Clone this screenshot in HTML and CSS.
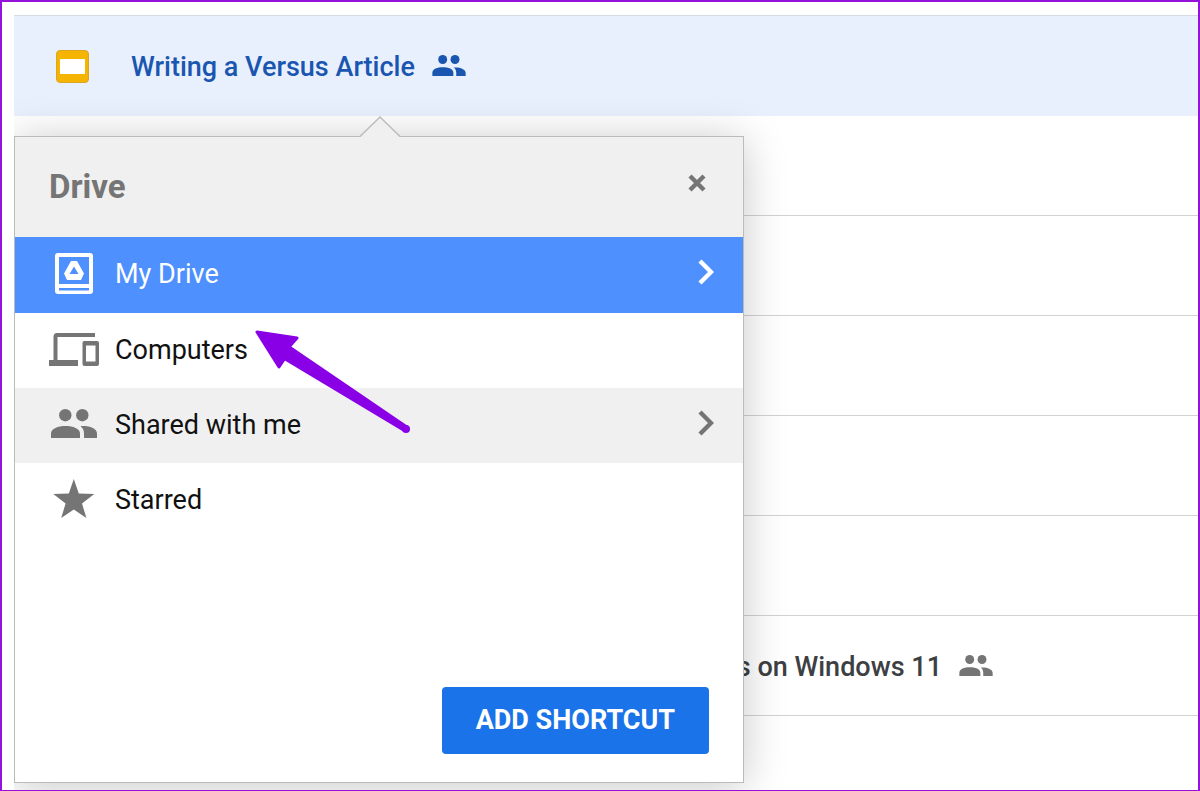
FILE: index.html
```html
<!DOCTYPE html>
<html lang="en">
<head>
    <meta charset="UTF-8">
    <meta name="viewport" content="width=device-width, initial-scale=1.0">
    <title>Add Shortcut</title>
    <link rel="stylesheet" href="styles.css">
</head>
<body>

    <!-- Shared icon shapes -->
    <svg class="sprite" aria-hidden="true">
        <symbol id="people" viewBox="0 0 46 29">
            <circle cx="14.3" cy="6.2" r="6.2"/>
            <circle cx="31.3" cy="6.2" r="6.2"/>
            <path d="M0 29V24.5C0 19.5 7 17 14.5 17S29 19.5 29 24.5V29Z"/>
            <path d="M29.5 17.2C38 16.6 46 19.3 46 24.5V29H33V24.5C33 21.3 31.8 19 29.5 17.2Z"/>
        </symbol>
        <symbol id="chevron" viewBox="0 0 16 26">
            <path d="M2 2L13 13L2 24" fill="none" stroke="currentColor" stroke-width="4.4"/>
        </symbol>
    </svg>

    <main class="drive">
        <ul class="file-list">
            <li class="file selected">
                <svg class="file-icon" viewBox="0 0 33 33" aria-hidden="true">
                    <rect x="0.5" y="0.5" width="32" height="32" rx="3.5" fill="#f4b400" stroke="#dba520"/>
                    <rect x="4" y="9" width="25" height="15" fill="#fff"/>
                </svg>
                <a class="file-name" href="#">Writing a Versus Article</a>
                <svg class="shared-icon" aria-hidden="true"><use href="#people"/></svg>
            </li>
            <li class="file"></li>
            <li class="file"></li>
            <li class="file"></li>
            <li class="file"></li>
            <li class="file"></li>
            <li class="file">
                <a class="file-name covered" href="#">s on Windows 11</a>
                <svg class="shared-icon" aria-hidden="true"><use href="#people"/></svg>
            </li>
        </ul>

        <!-- Add shortcut popup -->
        <section class="picker" role="dialog" aria-labelledby="pickerTitle">
            <svg class="picker-tip" viewBox="0 0 40 21" aria-hidden="true">
                <path d="M0 21L20 1L40 21Z" fill="#f0f0f0"/>
                <path d="M0 20.5L20 1L40 20.5" fill="none" stroke="#bbb" stroke-width="1.4"/>
            </svg>
            <header class="picker-header">
                <h2 id="pickerTitle">Drive</h2>
                <button class="close" aria-label="Close">
                    <svg viewBox="0 0 20 20" aria-hidden="true">
                        <path d="M3 3L17 17M17 3L3 17" stroke="currentColor" stroke-width="4.4"/>
                    </svg>
                </button>
            </header>

            <div class="locations">
                <button class="location active">
                    <svg class="location-icon" viewBox="0 0 50 42" aria-hidden="true">
                        <path fill-rule="evenodd" d="M9 0H41Q44 0 44 3V38Q44 41 41 41H9Q6 41 6 38V3Q6 0 9 0ZM10 4V31H40V4ZM10 35V37.5H40V35Z"/>
                        <path fill-rule="evenodd" d="M22 8H28L35 20.5L32 27H18L15 20.5ZM25 13.5L20.5 21H29.5Z"/>
                    </svg>
                    <span>My Drive</span>
                    <svg class="chevron" aria-hidden="true"><use href="#chevron"/></svg>
                </button>
                <button class="location">
                    <svg class="location-icon" viewBox="0 0 50 42" aria-hidden="true">
                        <path d="M8 4H46V8H8.500V31H29V37H0V31H4.500V8Q4.500 4 8 4Z"/>
                        <path fill-rule="evenodd" d="M35 12H48Q50 12 50 14V35Q50 37 48 37H35.500Q33.500 37 33.500 35V14Q33.500 12 35 12ZM37 16.500V32.500H46.500V16.500Z"/>
                    </svg>
                    <span>Computers</span>
                </button>
                <button class="location hover">
                    <svg class="location-icon" viewBox="0 0 50 42" aria-hidden="true">
                        <use href="#people" x="2" y="5" width="46" height="29"/>
                    </svg>
                    <span>Shared with me</span>
                    <svg class="chevron" aria-hidden="true"><use href="#chevron"/></svg>
                </button>
                <button class="location">
                    <svg class="location-icon" viewBox="0 0 50 42" aria-hidden="true">
                        <path d="M24.800 0L29.800 14.500L45.300 15L33 24.500L37.400 39L24.800 30.500L12.200 39L16.600 24.500L4.300 15L19.800 14.500Z"/>
                    </svg>
                    <span>Starred</span>
                </button>
            </div>

            <footer class="picker-footer">
                <button class="add-shortcut">ADD SHORTCUT</button>
            </footer>
        </section>

        <!-- Pointer arrow -->
        <svg class="arrow" viewBox="0 0 156 104" aria-hidden="true">
            <path d="M2 2L42 8L34 17L30 28L24 37Z" fill="#8a00e6" stroke="#8a00e6" stroke-width="3" stroke-linejoin="round"/>
            <path d="M34 15L153 96L149 102L29 30Z" fill="#8a00e6"/>
            <circle cx="151" cy="99" r="4" fill="#8a00e6"/>
        </svg>
    </main>

</body>
</html>
```

FILE: styles.css
```css
* {
    box-sizing: border-box;
}

body {
    font-family: Roboto, "Liberation Sans", sans-serif;
    margin: 0;
    min-height: 100vh;
    display: flex;
    background: #fff;
    border: 2px solid #9412dc;
    border-bottom-width: 1px;
    color: #111;
}

button {
    font: inherit;
    color: inherit;
    border: none;
    background: none;
    padding: 0;
    cursor: pointer;
}

svg {
    fill: currentColor;
    flex-shrink: 0;
}

.sprite {
    position: absolute;
    width: 0;
    height: 0;
}

.drive {
    position: relative;
    flex: 1;
    margin-left: 12px;
    padding-top: 13px;
    overflow: hidden;
}

/* File rows */
.file-list {
    list-style: none;
    margin: 0;
    padding: 0;
    border-top: 1px solid #d5dbe0;
}

.file {
    display: flex;
    align-items: center;
    height: 100px;
    padding: 2px 0 0 42px;
    border-bottom: 1px solid #d2d2d2;
    color: #757575;
}

.file.selected {
    background: #e8f0fe;
    border-bottom-color: #e8f0fe;
    color: #1a56b0;
}

.file-icon {
    width: 33px;
    height: 33px;
    margin-right: 42px;
}

.file-name {
    font-size: 27px;
    font-weight: 500;
    color: #3c4043;
    text-decoration: none;
    white-space: nowrap;
}

.selected .file-name {
    color: inherit;
}

.file-name.covered {
    width: 886px;
    text-align: right;
}

.shared-icon {
    width: 34px;
    height: 21px;
    margin: 0 0 2px 17px;
}

/* Popup */
.picker {
    position: absolute;
    top: 134px;
    left: 0;
    width: 730px;
    min-height: 647px;
    display: flex;
    flex-direction: column;
    background: #fff;
    border: 1px solid #bbb;
    box-shadow: 0 4px 40px rgba(0, 0, 0, 0.22);
}

.picker-tip {
    position: absolute;
    top: -21px;
    left: 345px;
    width: 40px;
    height: 21px;
}

.picker-header {
    display: flex;
    align-items: center;
    justify-content: space-between;
    height: 100px;
    padding: 0 36px 2px 34px;
    background: #f0f0f0;
    color: #757575;
}

.picker-header h2 {
    margin: 0;
    font-size: 33px;
    font-weight: 700;
}

.close {
    display: flex;
    padding-bottom: 6px;
}

.close svg {
    width: 20px;
    height: 20px;
}

.locations {
    display: flex;
    flex-direction: column;
    flex: 1;
}

.location {
    display: flex;
    align-items: center;
    gap: 16px;
    height: 75px;
    padding: 0 29px 2px 34px;
    font-size: 27px;
    text-align: left;
}

.location svg {
    color: #757575;
}

.location.hover {
    background: #f0f0f0;
}

.location.active {
    height: 76px;
    background: #4d90fe;
    color: #fff;
}

.location.active svg {
    color: #fff;
}

.location-icon {
    width: 50px;
    height: 42px;
}

.chevron {
    width: 16px;
    height: 26px;
    margin: 0 0 4px auto;
}

.picker-footer {
    display: flex;
    justify-content: flex-end;
    padding: 0 34px 28px;
}

.add-shortcut {
    height: 67px;
    padding: 0 34px 2px;
    border-radius: 4px;
    background: #1a73e8;
    color: #fff;
    font-size: 27px;
    font-weight: 700;
}

.arrow {
    position: absolute;
    top: 328px;
    left: 241px;
    width: 156px;
    height: 104px;
    pointer-events: none;
}
```
